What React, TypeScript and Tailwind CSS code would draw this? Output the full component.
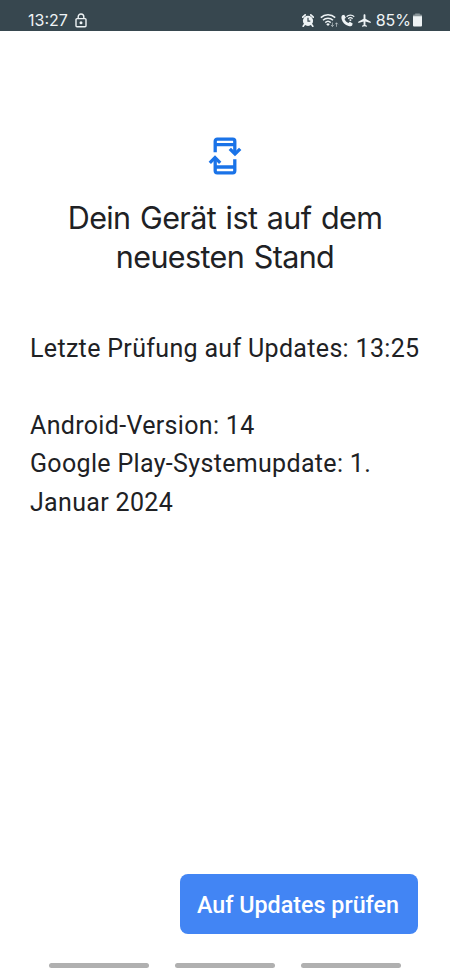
import { MdAirplanemodeActive } from "react-icons/md";

function LockIcon() {
  return (
    <svg className="h-[15px] w-3" viewBox="0 0 12 15" fill="none" stroke="currentColor" strokeWidth="1.4">
      <rect x="1" y="5.6" width="10" height="8.2" rx="1" />
      <path d="M3.2 5.5V3.8a2.8 2.8 0 0 1 5.6 0v1.7" />
      <circle cx="6" cy="9.7" r="0.8" fill="currentColor" />
    </svg>
  );
}

function AlarmIcon() {
  return (
    <svg className="h-[13px] w-3" viewBox="0 0 12 13">
      <path d="M0.7 3.2 3.2 0.9M11.3 3.2 8.8 0.9M2.4 10.6 1.2 12.2M9.6 10.6 10.8 12.2" stroke="currentColor" strokeWidth="1.7" strokeLinecap="round" />
      <circle cx="6" cy="6.8" r="5.1" fill="currentColor" />
      <path d="M6 3.8v3.4h2.3" fill="none" stroke="#37474f" strokeWidth="1.2" />
    </svg>
  );
}

function WifiIcon() {
  return (
    <svg className="h-[15px] w-[19px]" viewBox="0 0 19 15" fill="none" stroke="currentColor" strokeWidth="1.5">
      <path d="M0.8 4.6a10.4 10.4 0 0 1 14.4 0M3 7.2a7.2 7.2 0 0 1 10 0M5.3 9.6a3.9 3.9 0 0 1 5.4 0" />
      <path d="M8 13 6.2 11.2a2.5 2.5 0 0 1 3.6 0z" fill="currentColor" stroke="none" />
      <path d="M12.4 9.5v4M11 12l1.4 1.5 1.4-1.5M16.5 13.8v-4M15.1 11.3l1.4-1.5 1.4 1.5" strokeWidth="0.9" opacity="0.6" />
    </svg>
  );
}

function WifiCallIcon() {
  return (
    <svg className="h-[13px] w-[14px]" viewBox="0 0 14 13" fill="none">
      <path d="M1.2 1.3 3.2 0.8l1.7 3-1.4 1.3c.8 2 2 3.1 3.9 4l1.4-1.4 2.9 1.8-.6 2.1c-.5.8-2.2 1-3.5.5C4 10.9 1.5 8.4.6 4.9.3 3.5.4 2.1 1.2 1.3z" fill="currentColor" />
      <path d="M5.6 2.7a5.4 5.4 0 0 1 7.6 0M7.2 4.7a3.2 3.2 0 0 1 4.4 0" stroke="currentColor" strokeWidth="1.2" />
      <path d="M9.4 7.2 8.1 5.9a1.8 1.8 0 0 1 2.6 0z" fill="currentColor" />
    </svg>
  );
}

function BatteryIcon() {
  return (
    <svg className="h-[14px] w-[9px]" viewBox="0 0 9 14" fill="currentColor">
      <path d="M2.2 0.5h4.6V1.5H8a1 1 0 0 1 1 1V4H0V2.5a1 1 0 0 1 1-1h1.2z" opacity="0.45" />
      <path d="M0 3.2h9v9.3a1 1 0 0 1-1 1H1a1 1 0 0 1-1-1z" />
    </svg>
  );
}

function SystemUpdateIcon() {
  return (
    <svg className="h-10 w-9" viewBox="0 0 36 40" fill="none" stroke="#1a73e8" strokeWidth="3.3">
      <path d="M8.2 16.3V5.2a2 2 0 0 1 2-2h15.6a2 2 0 0 1 2 2V18M8.2 8.7h19.6" />
      <path d="M22.8 12.8 28 18l5.2-5.2" />
      <path d="M27.8 23.3v11.5a2 2 0 0 1-2 2H10.2a2 2 0 0 1-2-2V22M8.2 31h19.6" />
      <path d="M2.8 26.8 8 21.6l5.2 5.2" />
    </svg>
  );
}

function StatusBar() {
  return (
    <header className="flex h-[31px] items-center justify-between bg-[#37474f] px-7 pt-[9px] text-[#eef3f5]">
      <div className="flex items-center gap-[7px]">
        <span className="font-['Inter',sans-serif] text-[16px] leading-none">13:27</span>
        <LockIcon />
      </div>
      <div className="flex items-center">
        <AlarmIcon />
        <div className="ml-1.5">
          <WifiIcon />
        </div>
        <div className="ml-[2px]">
          <WifiCallIcon />
        </div>
        <MdAirplanemodeActive className="ml-[2px] size-[15px]" />
        <span className="ml-1 font-['Inter',sans-serif] text-[16px] leading-none">85%</span>
        <div className="ml-[2px]">
          <BatteryIcon />
        </div>
      </div>
    </header>
  );
}

export default function App() {
  return (
    <div className="flex h-[975px] w-[450px] flex-col bg-white font-['Roboto',sans-serif] text-[#202124]">
      <StatusBar />

      <main className="flex flex-1 flex-col pt-[105px]">
        <div className="flex justify-center">
          <SystemUpdateIcon />
        </div>
        <h1 className="mt-[22px] text-center font-['Inter',sans-serif] text-[30.5px] leading-[39px] font-normal tracking-[-0.6px] [word-spacing:1.5px]">
          Dein Gerät ist auf dem
          <br />
          neuesten Stand
        </h1>

        <div className="mt-[54px] pl-[30px] text-[25px] leading-[38.4px] tracking-[0.33px] whitespace-nowrap">
          <p>Letzte Prüfung auf Updates: 13:25</p>
          <p className="mt-[38.4px]">Android-Version: 14</p>
          <p>
            Google Play-Systemupdate: 1.
            <br />
            Januar 2024
          </p>
        </div>

        <div className="mt-auto flex justify-end pr-8">
          <button className="h-[60px] w-[238px] rounded-lg bg-[#4285f4] pt-[3px] pr-[2px] text-[23.3px] font-medium text-white">
            Auf Updates prüfen
          </button>
        </div>
      </main>

      <nav className="mt-[29px] mb-[7px] flex justify-center gap-[26px]">
        <span className="h-[5px] w-[100px] rounded-full bg-[#b0b0b0]" />
        <span className="h-[5px] w-[100px] rounded-full bg-[#b0b0b0]" />
        <span className="h-[5px] w-[100px] rounded-full bg-[#b0b0b0]" />
      </nav>
    </div>
  );
}
